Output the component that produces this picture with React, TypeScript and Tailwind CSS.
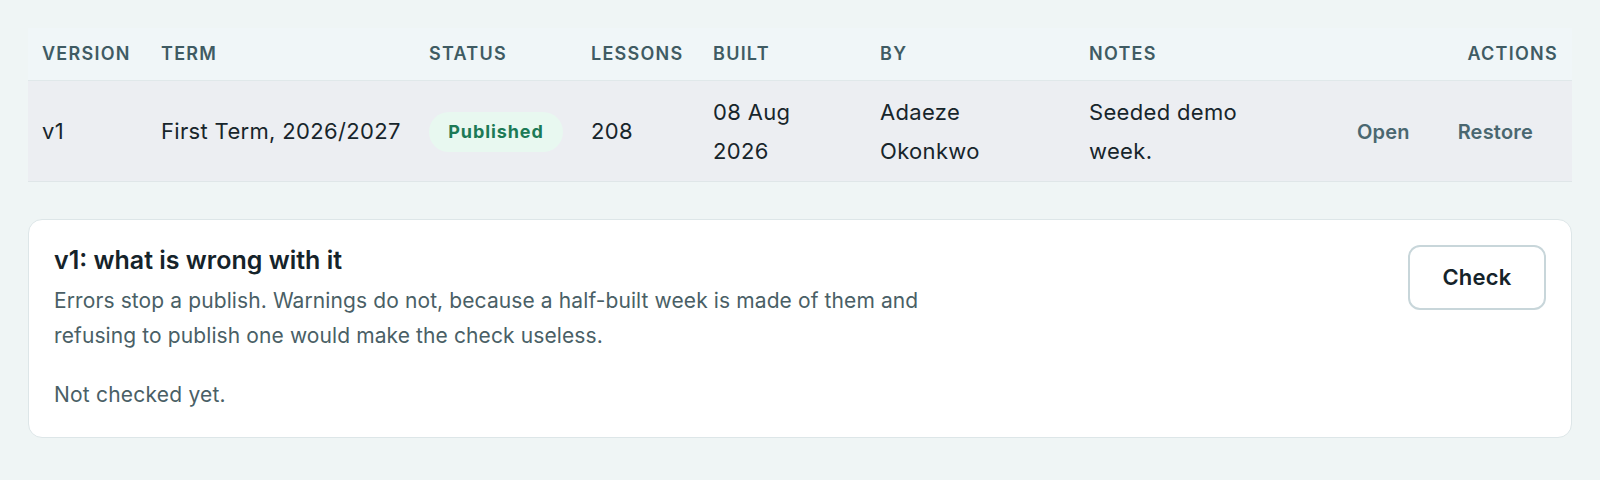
import React from 'react';

// Version history row + "what is wrong" check panel.
const FONT = { fontFamily: 'Inter, "Noto Sans", sans-serif' };

const cols = [119, 268, 162, 122, 167, 209, 245];

function Th({ children, right }: { children: React.ReactNode; right?: boolean }) {
  return (
    <th className={'h-[52px] px-[14px] text-[18px] font-semibold uppercase tracking-[0.07em] text-[#3f5b63] ' + (right ? 'text-right' : 'text-left')}>
      {children}
    </th>
  );
}

function Td({ children }: { children: React.ReactNode }) {
  return <td className="px-[14px] pt-[12px] pb-[10px] align-middle text-[22px] leading-[39px] tracking-[0.015em] text-[#17252b]">{children}</td>;
}

export default function App() {
  return (
    <div className="min-h-[480px] bg-[#eff5f5] px-7 pt-7 pb-10" style={FONT}>
      <table className="w-full table-fixed border-collapse">
        <colgroup>
          {cols.map((w, i) => <col key={i} style={{ width: w }} />)}
          <col />
        </colgroup>
        <thead className="bg-[#f0f6f8]">
          <tr className="border-b border-[#e0e8ea]">
            <Th>Version</Th>
            <Th>Term</Th>
            <Th>Status</Th>
            <Th>Lessons</Th>
            <Th>Built</Th>
            <Th>By</Th>
            <Th>Notes</Th>
            <Th right>Actions</Th>
          </tr>
        </thead>
        <tbody>
          <tr className="border-b border-[#dfe6e8] bg-[#eceef2]">
            <Td>v1</Td>
            <Td>First Term, 2026/2027</Td>
            <Td>
              <span className="inline-flex h-10 w-[134px] items-center justify-center rounded-full bg-[#e8f8f0] text-[18px] font-bold tracking-[0.05em] text-[#1c7a56]">Published</span>
            </Td>
            <Td>208</Td>
            <Td><div className="w-[100px]">08 Aug 2026</div></Td>
            <Td><div className="w-[130px]">Adaeze Okonkwo</div></Td>
            <Td><div className="w-[160px]">Seeded demo week.</div></Td>
            <td className="pr-[27px] pt-[2px]">
              <div className="flex justify-end gap-6">
                <button className="px-3 text-[20px] font-semibold tracking-[0.01em] text-[#4a6770]">Open</button>
                <button className="px-3 text-[20px] font-semibold tracking-[0.01em] text-[#4a6770]">Restore</button>
              </div>
            </td>
          </tr>
        </tbody>
      </table>

      <div className="mt-[37px] flex items-start justify-between rounded-[14px] border border-[#dde6e8] bg-white p-[25px]">
        <div>
          <h2 className="text-[25px] font-semibold leading-[30px] text-[#15232a]">v1: what is wrong with it</h2>
          <p className="mt-[8px] max-w-[920px] text-[21px] leading-[35px] tracking-[0.005em] text-[#4a5f66]">
            Errors stop a publish. Warnings do not, because a half-built week is made of them and refusing to publish one would make the check useless.
          </p>
          <p className="mt-[24px] text-[21px] leading-[35px] tracking-[0.01em] text-[#4a5f66]">Not checked yet.</p>
        </div>
        <button className="h-[65px] w-[138px] rounded-[12px] border-2 border-[#c8d6da] bg-white text-[22px] font-semibold tracking-[0.01em] text-[#15232a]">Check</button>
      </div>
    </div>
  );
}
